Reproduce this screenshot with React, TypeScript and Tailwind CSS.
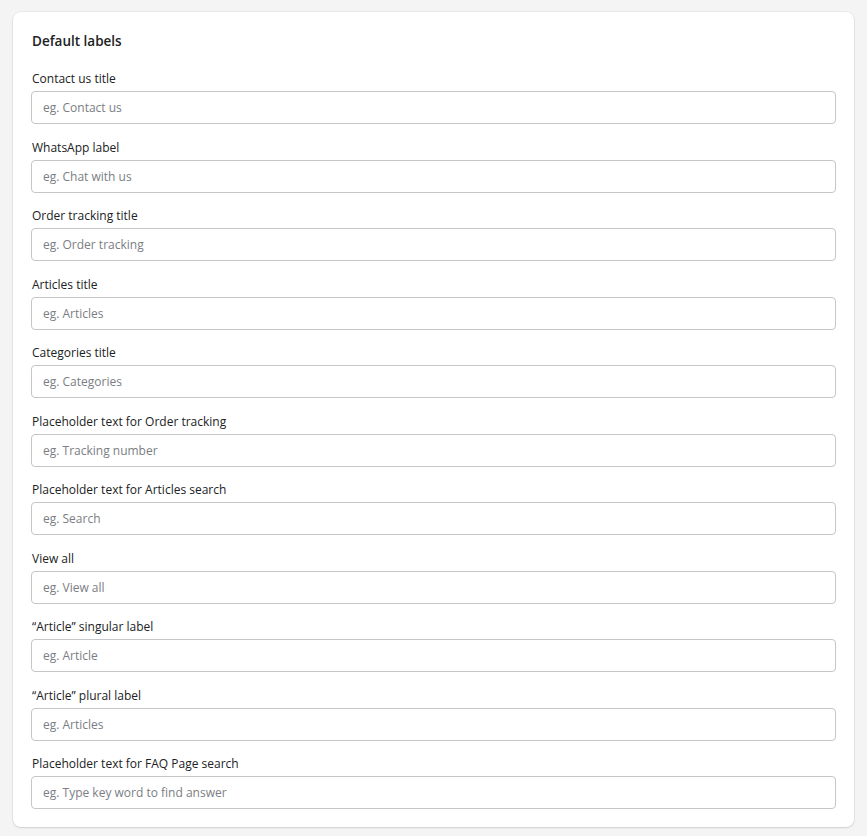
const fields = [
  { label: "Contact us title", placeholder: "eg. Contact us" },
  { label: "WhatsApp label", placeholder: "eg. Chat with us" },
  { label: "Order tracking title", placeholder: "eg. Order tracking" },
  { label: "Articles title", placeholder: "eg. Articles" },
  { label: "Categories title", placeholder: "eg. Categories" },
  { label: "Placeholder text for Order tracking", placeholder: "eg. Tracking number" },
  { label: "Placeholder text for Articles search", placeholder: "eg. Search" },
  { label: "View all", placeholder: "eg. View all" },
  { label: "\u201cArticle\u201d singular label", placeholder: "eg. Article" },
  { label: "\u201cArticle\u201d plural label", placeholder: "eg. Articles" },
  { label: "Placeholder text for FAQ Page search", placeholder: "eg. Type key word to find answer" },
];

export default function App() {
  return (
    <div
      className="min-h-[836px] bg-[#f4f4f4] pl-[13px] pr-[13px] pt-[12px] pb-[9px]"
      style={{ fontFamily: '"Open Sans", "Noto Sans", sans-serif' }}
    >
      <div className="rounded-lg bg-white px-[18px] pt-[20px] pb-[18px] shadow-[0_0_0_1px_rgba(0,0,0,0.04),0_1px_2px_rgba(0,0,0,0.12)]">
        <h2 className="mb-[18px] pl-px text-[13.5px] leading-[18px] font-semibold text-[#202223]">Default labels</h2>
        <div className="flex flex-col gap-[12.5px]">
          {fields.map((f, i) => (
            <div key={i} className="flex flex-col">
              <label htmlFor={`f-${i}`} className="mb-[2px] pl-px text-[12px] leading-[21px] text-[#202223]">
                {f.label}
              </label>
              <input
                id={`f-${i}`}
                placeholder={f.placeholder}
                className="h-[33px] w-full rounded-[4px] border border-[#c4c6c9] bg-white px-[11px] text-[12px] text-[#202223] outline-none placeholder:text-[#7a7e83]"
              />
            </div>
          ))}
        </div>
      </div>
    </div>
  );
}
